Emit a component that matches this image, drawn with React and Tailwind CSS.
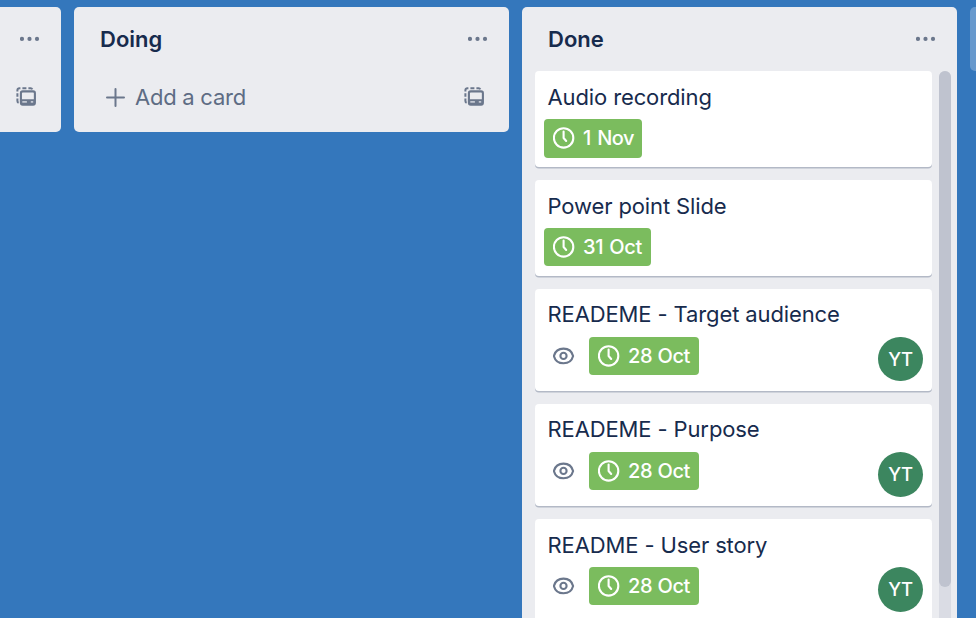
const cards = [
  { title: "Audio recording", date: "1 Nov", badge: "w-[98px] h-[39px] pb-px", height: "h-24", head: "pt-[10px]", dateTrack: "tracking-[-0.5px] [word-spacing:1.6px]" },
  { title: "Power point Slide", date: "31 Oct", badge: "w-[107px] h-[38px]", height: "h-24", head: "pt-[10px]", dateTrack: "tracking-[-0.3px] [word-spacing:1px]" },
  { title: "READEME - Target audience", date: "28 Oct", badge: "w-[110px] h-[38px]", height: "h-[102px]", head: "pt-[9px]", watched: true, dateTrack: "tracking-[-0.4px] [word-spacing:0.5px]", avatar: "h-11" },
  { title: "READEME - Purpose", date: "28 Oct", badge: "w-[110px] h-[38px]", height: "h-[102px]", head: "pt-[9px]", watched: true, dateTrack: "tracking-[-0.4px] [word-spacing:0.5px]", avatar: "h-[45px]" },
  { title: "README - User story", date: "28 Oct", badge: "w-[110px] h-[38px]", height: "h-[102px]", head: "pt-[10px]", watched: true, dateTrack: "tracking-[-0.4px] [word-spacing:0.5px]", avatar: "h-[45px]" },
];

function Dots() {
  return (
    <svg className="h-5 w-5 shrink-0 fill-[#6b778c]" viewBox="0 0 20 20">
      <circle cx="2" cy="9.9" r="2.1" />
      <circle cx="9.5" cy="9.9" r="2.1" />
      <circle cx="17" cy="9.9" r="2.1" />
    </svg>
  );
}

function TemplateIcon() {
  return (
    <svg className="h-5 w-5 shrink-0" viewBox="0 0 20 20" fill="none" stroke="#6b778c" strokeWidth="2">
      <path d="M1.4 4.5V3a2 2 0 0 1 2-1.8h1M6.4 1.2h4M12.4 1.2h2.2a2 2 0 0 1 1.7 1.2M1.4 6.2v3.6M1.4 11.6V14a2 2 0 0 0 1.2 1.8" />
      <rect x="4.9" y="4.4" width="14" height="13.2" rx="1.8" strokeWidth="2.1" />
      <path d="M4.9 12.2h14v3.6a2 2 0 0 1-2 2h-10a2 2 0 0 1-2-2z" fill="#6b778c" stroke="none" />
      <path d="M6.3 14.9h4.6M14.8 14.9h2.4" stroke="#c3c8d2" strokeWidth="1.6" />
    </svg>
  );
}

function Clock() {
  return (
    <svg className="h-[22px] w-[22px] shrink-0" viewBox="0 0 22 22" fill="none" stroke="white" strokeWidth="2.1">
      <circle cx="10.6" cy="10.9" r="9.7" />
      <path d="M10.6 4.6v6.4l2.6 3" strokeLinecap="round" strokeLinejoin="round" />
    </svg>
  );
}

function Eye() {
  return (
    <svg className="h-[18px] w-[22px] shrink-0" viewBox="0 0 22 18" fill="none" stroke="#6b778c" strokeWidth="2.1">
      <path d="M.9 9C2.1 4.2 6 1.6 10.5 1.6S18.9 4.2 20.1 9C18.9 13.8 15 16.3 10.5 16.3S2.1 13.8.9 9z" strokeLinejoin="round" />
      <circle cx="10.5" cy="8.9" r="3.1" />
    </svg>
  );
}

function Card({ title, date, badge, height, head, watched, dateTrack, avatar }) {
  return (
    <article className={`flex shrink-0 flex-col rounded-[4px] bg-white shadow-[0_1.5px_0_#b3b9c6] ${height}`}>
      <h3 className={`h-12 whitespace-nowrap pl-[12.5px] text-[22px] leading-8 tracking-[-0.12px] ${head}`}>{title}</h3>
      <div className="flex items-start pl-[9px] pr-[9px]">
        {watched && (
          <div className="flex h-[38px] w-[45px] items-center pl-[9px]">
            <Eye />
          </div>
        )}
        <div className={`flex items-center gap-2 whitespace-nowrap rounded-[4px] bg-[#7bbc5e] pl-[9px] text-[20px] font-[450] text-white ${badge}`}>
          <Clock />
          <span className={dateTrack}>{date}</span>
        </div>
        {watched && (
          <div className={`ml-auto flex w-[45px] items-center justify-center rounded-full bg-[#3c865f] pt-px text-[18.5px] font-medium tracking-[-0.4px] text-white ${avatar}`}>
            YT
          </div>
        )}
      </div>
    </article>
  );
}

export default function App() {
  return (
    <main className="flex h-[618px] w-[976px] items-start gap-[13px] overflow-hidden bg-[#3477bc] pt-[7px] font-['Inter','Liberation_Sans',sans-serif] text-[#172b4d]">
      <section className="flex h-[125px] w-[61px] shrink-0 flex-col items-end rounded-r-[5px] bg-[#ebecf0]">
        <div className="flex h-16 items-center pr-[21px]"><Dots /></div>
        <div className="flex h-[52px] items-center pr-[25px]"><TemplateIcon /></div>
      </section>

      <section className="h-[125px] w-[435px] shrink-0 rounded-[5px] bg-[#ebecf0]">
        <header className="flex h-16 items-center justify-between pl-[26px] pr-[21px]">
          <h2 className="text-[22px] font-semibold">Doing</h2>
          <Dots />
        </header>
        <div className="flex h-[52px] items-center pl-[32px] pr-[25px] text-[#5e6c84]">
          <svg className="h-[19px] w-[19px]" viewBox="0 0 19 19" stroke="#6b778c" strokeWidth="2" strokeLinecap="round">
            <path d="M9.5 1v17M1 9.5h17" />
          </svg>
          <span className="ml-[10px] mr-auto text-[22px] tracking-[-0.25px]">Add a card</span>
          <TemplateIcon />
        </div>
      </section>

      <section className="h-[611px] w-[435px] shrink-0 rounded-t-[5px] bg-[#ebecf0]">
        <header className="flex h-16 items-center justify-between pl-[26px] pr-[21px]">
          <h2 className="text-[22px] font-semibold">Done</h2>
          <Dots />
        </header>
        <div className="flex h-[547px] overflow-hidden pl-[13px]">
          <div className="flex w-[397px] flex-col gap-[13px]">
            {cards.map((card) => <Card key={card.title} {...card} />)}
          </div>
          <div className="ml-[7px] h-[547px] w-3 rounded-t-full bg-[#dadce4]">
            <div className="h-[516px] w-3 rounded-full bg-[#bfc3cf]" />
          </div>
        </div>
      </section>

      <section className="h-16 w-10 shrink-0 rounded-l-[5px] bg-white/25" />
    </main>
  );
}
